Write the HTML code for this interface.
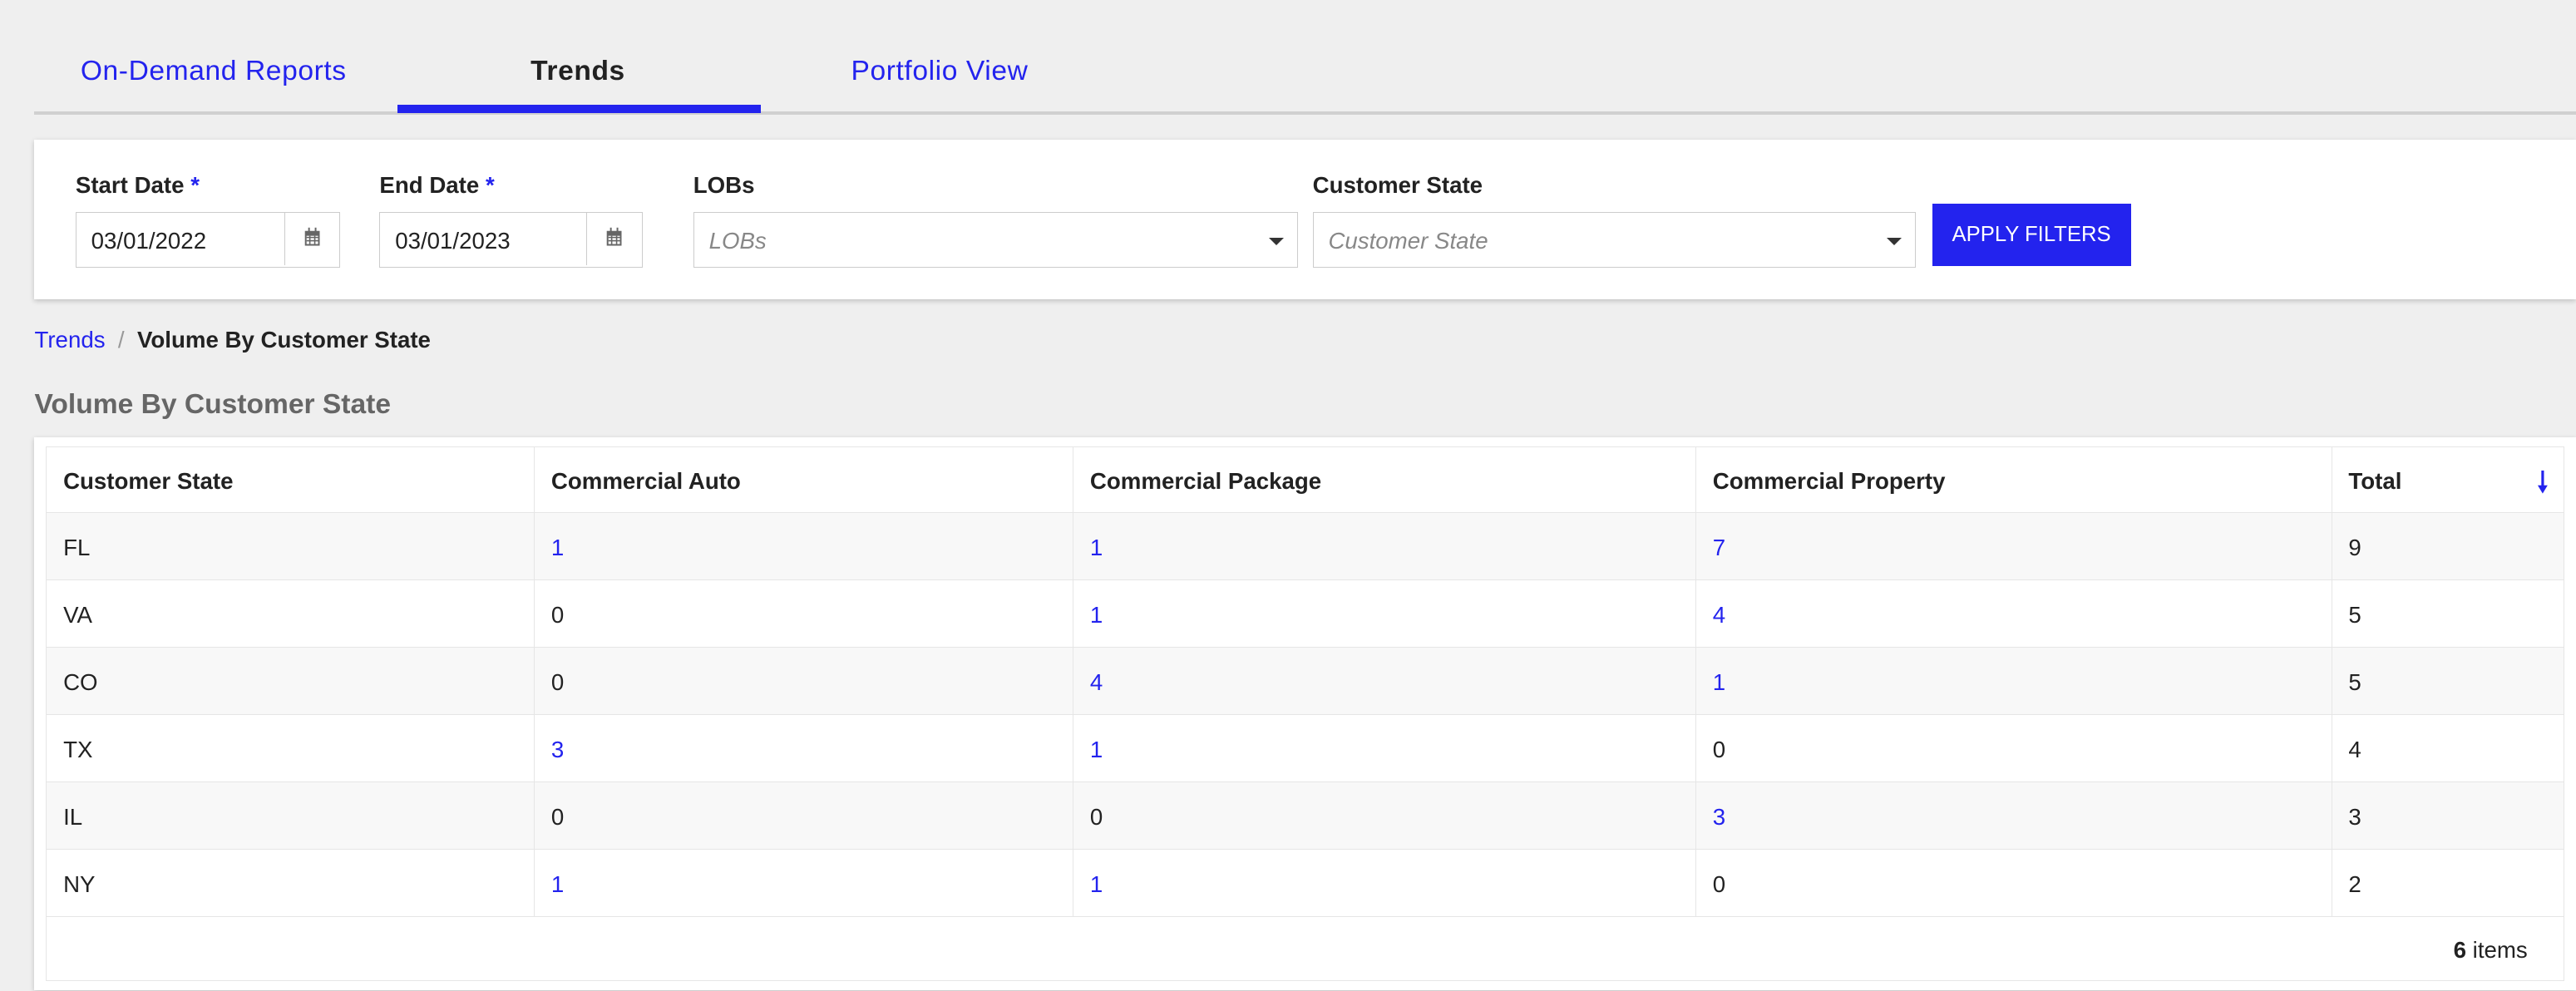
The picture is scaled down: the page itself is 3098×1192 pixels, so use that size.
<!DOCTYPE html>
<html><head><meta charset="utf-8"><style>
html{zoom:1.9758}
body{margin:0;width:1568px;height:603px;background:#efefef;font-family:"Liberation Sans",sans-serif;font-size:14px;color:#222;position:relative;overflow:hidden}
.a{position:absolute}
.blue{color:#2323ee}
.tab{position:absolute;top:34px;font-size:17px;letter-spacing:.3px}
.lbl{position:absolute;top:105px;font-weight:bold;font-size:14px}
.lbl span{color:#2323ee}
.inp{position:absolute;top:129px;height:34px;background:#fff;border:1px solid #ccc;box-sizing:border-box}
.inp .t{position:absolute;left:9px;top:9px}
.cal{position:absolute;right:0;top:0;width:33px;height:32px;border-left:1px solid #ccc}
.ph{color:#888;font-style:italic}
.caret{position:absolute;right:8px;top:15px;width:0;height:0;border-left:5px solid transparent;border-right:5px solid transparent;border-top:5px solid #333}
table{position:absolute;left:28px;top:272px;width:1533px;border-collapse:collapse;table-layout:fixed}
td,th{border:1px solid #e6e6e6;height:40px;padding:2px 10px 0;text-align:left;font-size:14px;box-sizing:border-box}
tbody td{height:41px}
th{font-weight:bold;color:#222;position:relative}
tbody tr:nth-child(odd){background:#f8f8f8}
</style></head><body>
<div class="tab blue" style="left:49px">On-Demand Reports</div>
<div class="tab" style="left:323px;font-weight:bold">Trends</div>
<div class="tab blue" style="left:518px">Portfolio View</div>
<div class="a" style="left:21px;top:68px;width:1547px;height:2px;background:#d0d0d0"></div>
<div class="a" style="left:242px;top:64px;width:221px;height:5px;background:#2323ee"></div>

<div class="a" style="left:21px;top:85px;width:1547px;height:97px;background:#fff;box-shadow:0 1px 3px rgba(0,0,0,.2)"></div>
<div class="lbl" style="left:46px">Start Date <span>*</span></div>
<div class="lbl" style="left:231px">End Date <span>*</span></div>
<div class="lbl" style="left:422px">LOBs</div>
<div class="lbl" style="left:799px">Customer State</div>
<div class="inp" style="left:46px;width:161px"><span class="t">03/01/2022</span><div class="cal"><svg width="33" height="31"><rect x="12" y="11" width="9" height="9" fill="#666"/><rect x="13" y="14" width="7" height="5" fill="#fff"/><rect x="14" y="9" width="1" height="3" fill="#666"/><rect x="18" y="9" width="1" height="3" fill="#666"/><path d="M13 15h7M13 17h7M15 14v5M18 14v5" stroke="#666" stroke-width=".8"/></svg></div></div>
<div class="inp" style="left:231px;width:160px"><span class="t">03/01/2023</span><div class="cal"><svg width="33" height="31"><rect x="12" y="11" width="9" height="9" fill="#666"/><rect x="13" y="14" width="7" height="5" fill="#fff"/><rect x="14" y="9" width="1" height="3" fill="#666"/><rect x="18" y="9" width="1" height="3" fill="#666"/><path d="M13 15h7M13 17h7M15 14v5M18 14v5" stroke="#666" stroke-width=".8"/></svg></div></div>
<div class="inp" style="left:422px;width:368px"><span class="t ph">LOBs</span><div class="caret"></div></div>
<div class="inp" style="left:799px;width:367px"><span class="t ph">Customer State</span><div class="caret"></div></div>
<div class="a" style="left:1176px;top:124px;width:121px;height:38px;background:#2323ee;color:#fff;font-size:13px;line-height:38px;text-align:center">APPLY FILTERS</div>

<div class="a" style="left:21px;top:199px"><span class="blue">Trends</span> <span style="color:#999">&nbsp;/&nbsp;</span> <b>Volume By Customer State</b></div>
<div class="a" style="left:21px;top:237px;font-size:17px;font-weight:bold;color:#666">Volume By Customer State</div>

<div class="a" style="left:21px;top:266px;width:1547px;height:337px;background:#fff;box-shadow:0 1px 3px rgba(0,0,0,.2)"></div>
<table>
<colgroup><col style="width:297px"><col style="width:328px"><col style="width:379px"><col style="width:387px"><col></colgroup>
<thead><tr style="background:#fff"><th>Customer State</th><th>Commercial Auto</th><th>Commercial Package</th><th>Commercial Property</th><th>Total<svg style="position:absolute;right:9px;top:13px" width="8" height="16"><path d="M4 1v12" stroke="#2323ee" stroke-width="1.6"/><path d="M1 10l3 5 3-5z" fill="#2323ee"/></svg></th></tr></thead>
<tbody>
<tr><td>FL</td><td class="blue">1</td><td class="blue">1</td><td class="blue">7</td><td>9</td></tr>
<tr><td>VA</td><td>0</td><td class="blue">1</td><td class="blue">4</td><td>5</td></tr>
<tr><td>CO</td><td>0</td><td class="blue">4</td><td class="blue">1</td><td>5</td></tr>
<tr><td>TX</td><td class="blue">3</td><td class="blue">1</td><td>0</td><td>4</td></tr>
<tr><td>IL</td><td>0</td><td>0</td><td class="blue">3</td><td>3</td></tr>
<tr><td>NY</td><td class="blue">1</td><td class="blue">1</td><td>0</td><td>2</td></tr>
<tr style="background:#fff"><td colspan="5" style="text-align:right;padding-right:22px;height:39px"><b>6</b> items</td></tr>
</tbody></table>
</body></html>
